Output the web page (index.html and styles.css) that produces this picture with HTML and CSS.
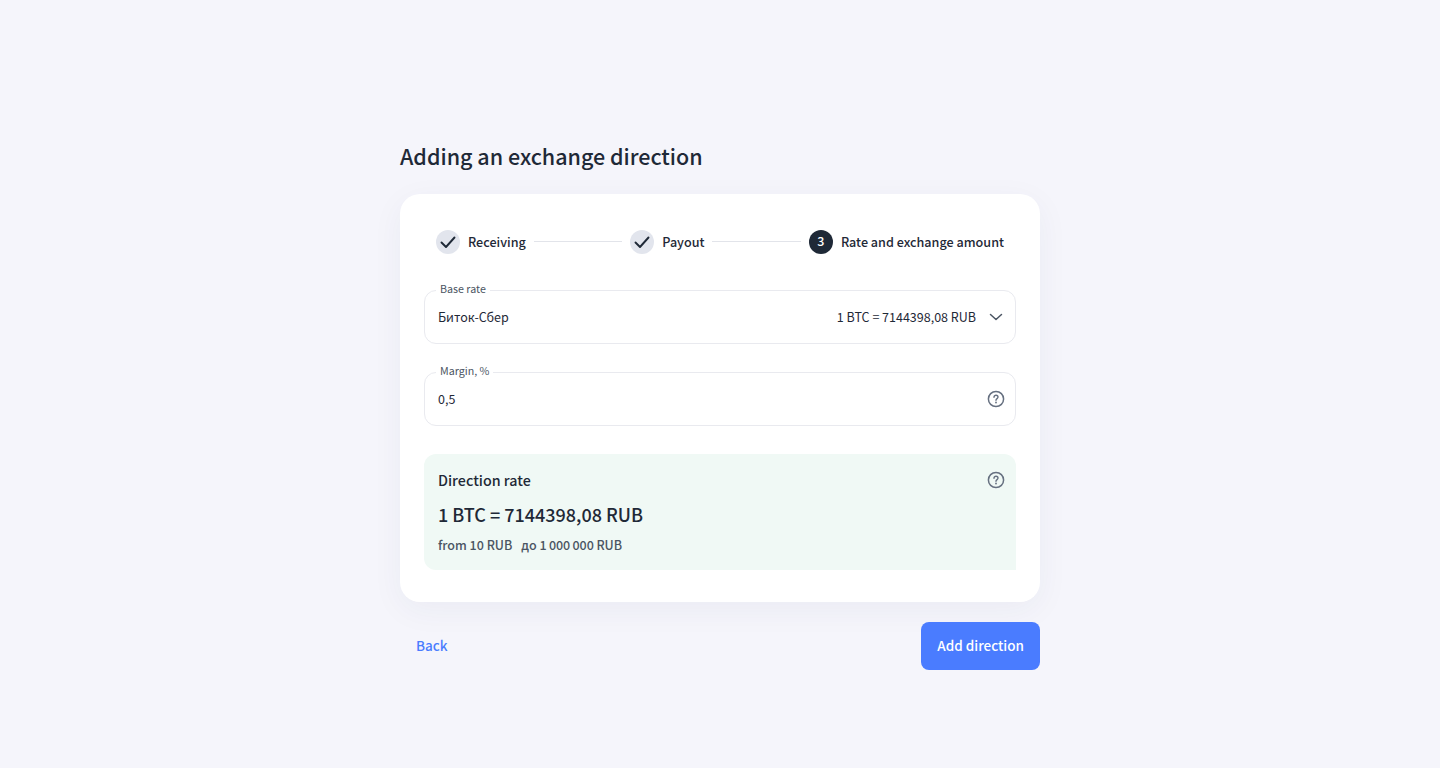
FILE: index.html
```html
<!DOCTYPE html>
<html>
<head>
  <meta charset="UTF-8">
  <title>Adding an exchange direction</title>
  <link rel="stylesheet" href="styles.css">
</head>
<body>
  <div class="container">
    <h2>Adding an exchange direction</h2>

    <div class="card">
      <div class="steps">
        <div class="step">
          <span class="step-icon done">
            <svg width="24" height="24" viewBox="0 0 24 24" fill="none"><path d="M5.500 12.500l4.500 4.500 8.500-9.500" stroke="#1f2937" stroke-width="1.900" stroke-linecap="round" stroke-linejoin="round"/></svg>
          </span>
          <span class="step-label">Receiving</span>
        </div>
        <div class="step-line"></div>
        <div class="step">
          <span class="step-icon done">
            <svg width="24" height="24" viewBox="0 0 24 24" fill="none"><path d="M5.500 12.500l4.500 4.500 8.500-9.500" stroke="#1f2937" stroke-width="1.900" stroke-linecap="round" stroke-linejoin="round"/></svg>
          </span>
          <span class="step-label">Payout</span>
        </div>
        <div class="step-line"></div>
        <div class="step">
          <span class="step-icon current">3</span>
          <span class="step-label">Rate and exchange amount</span>
        </div>
      </div>

      <div class="field">
        <span class="field-label">Base rate</span>
        <span class="field-value">Биток-Сбер</span>
        <span class="field-rate">1 BTC = 7144398,08 RUB</span>
        <svg class="chevron" width="24" height="24" viewBox="0 0 24 24" fill="none"><path d="M6.500 9.500l5.500 5 5.500-5" stroke="#4b5563" stroke-width="1.500" stroke-linecap="round" stroke-linejoin="round"/></svg>
      </div>

      <div class="field">
        <span class="field-label">Margin, %</span>
        <span class="field-value">0,5</span>
        <svg class="help" width="20" height="20" viewBox="0 0 20 20" fill="none"><circle cx="10" cy="10" r="7.600" stroke="#667080" stroke-width="1.500"/><path d="M8 8.200c0-1.200.9-1.900 2-1.900s2 .7 2 1.800c0 1.500-2 1.500-2 3.100" stroke="#667080" stroke-width="1.400" stroke-linecap="round"/><circle cx="10" cy="13.500" r=".9" fill="#667080"/></svg>
      </div>

      <div class="rate-box">
        <div class="rate-head">
          <span class="rate-title">Direction rate</span>
          <svg class="help" width="20" height="20" viewBox="0 0 20 20" fill="none"><circle cx="10" cy="10" r="7.600" stroke="#667080" stroke-width="1.500"/><path d="M8 8.200c0-1.200.9-1.900 2-1.900s2 .7 2 1.800c0 1.500-2 1.500-2 3.100" stroke="#667080" stroke-width="1.400" stroke-linecap="round"/><circle cx="10" cy="13.500" r=".9" fill="#667080"/></svg>
        </div>
        <div class="rate-value">1 BTC = 7144398,08 RUB</div>
        <div class="rate-limits">
          <span>from 10 RUB</span>
          <span class="rate-max">до 1&#8201;000&#8201;000 RUB</span>
        </div>
      </div>
    </div>

    <div class="buttons">
      <button class="secondary"><span class="button-text">Back</span></button>
      <button><span class="button-text">Add direction</span></button>
    </div>
  </div>
</body>
</html>
```

FILE: styles.css
```css
body {
  font-family: "Noto Sans CJK SC", "Noto Sans", sans-serif;
  margin: 0;
  height: 768px;
  overflow: hidden;
  background-color: #f5f5fb;
  color: #1f2937;
}
.container {
  width: 640px;
  margin: 0 auto;
  padding-top: 139px;
}
h2 {
  margin: 0 0 21px;
  font-size: 21.5px;
  line-height: 34px;
  font-weight: 500;
}
.card {
  background-color: white;
  padding: 36px 24px 32px;
  border-radius: 20px;
  box-shadow: 0 8px 32px rgba(40,50,90,0.05);
}
.steps {
  display: flex;
  align-items: center;
  padding: 0 12px;
  height: 24px;
  margin-bottom: 36px;
}
.step {
  display: flex;
  align-items: center;
  gap: 8px;
}
.step-icon {
  width: 24px;
  height: 24px;
  border-radius: 50%;
  display: flex;
  align-items: center;
  justify-content: center;
  font-size: 12.5px;
  font-weight: 500;
  line-height: 22px;
  padding-bottom: 2px;
  box-sizing: border-box;
}
.step-icon.done {
  background-color: #e2e5ed;
  padding-bottom: 0;
}
.step-icon.current {
  background-color: #1f2937;
  color: white;
}
.step-label {
  font-size: 12.6px;
  font-weight: 500;
  color: #1f2937;
  margin-bottom: 2px;
}
.step-line {
  height: 1px;
  background-color: #e2e4ea;
  flex-grow: 1;
  margin: 0 8px 2px;
}
.field {
  position: relative;
  display: flex;
  align-items: center;
  height: 54px;
  box-sizing: border-box;
  padding: 0 9px 0 13px;
  margin-bottom: 28px;
  border: 1px solid #e9eaef;
  border-radius: 12px;
}
.field-label {
  position: absolute;
  top: -10px;
  left: 11px;
  padding: 0 4px;
  background-color: white;
  font-size: 10.7px;
  line-height: 16px;
  color: #4b5563;
}
.field-value {
  font-size: 12.5px;
  flex-grow: 1;
  margin-bottom: 2px;
}
.field-rate {
  font-size: 12.5px;
  margin: 0 8px 2px 0;
}
.chevron {
  margin-right: -2px;
}
.help {
  display: block;
}
.rate-box {
  background-color: #f0f9f5;
  border-radius: 12px 12px 0 12px;
  padding: 14px 10px 15px 14px;
}
.rate-head {
  display: flex;
  justify-content: space-between;
  align-items: center;
  height: 24px;
}
.rate-title {
  font-size: 14.3px;
  font-weight: 500;
  margin-bottom: 2px;
}
.rate-value {
  font-size: 18px;
  font-weight: 500;
  line-height: 28px;
  margin: 8px 0 1px;
}
.rate-limits {
  display: flex;
  gap: 9px;
  margin-top: 7px;
  font-size: 12.5px;
  font-weight: 500;
  line-height: 20px;
  color: #4b5563;
}
.rate-max {
  letter-spacing: -0.06px;
}
.buttons {
  display: flex;
  justify-content: space-between;
  margin-top: 20px;
}
button {
  background-color: #4a7cff;
  color: white;
  border: none;
  height: 48px;
  padding: 0 16px;
  border-radius: 8px;
  font-family: inherit;
  font-size: 13.5px;
  font-weight: 500;
}
.button-text {
  display: block;
  margin-bottom: 2px;
}
button.secondary {
  background-color: transparent;
  color: #4a7cff;
}
```
